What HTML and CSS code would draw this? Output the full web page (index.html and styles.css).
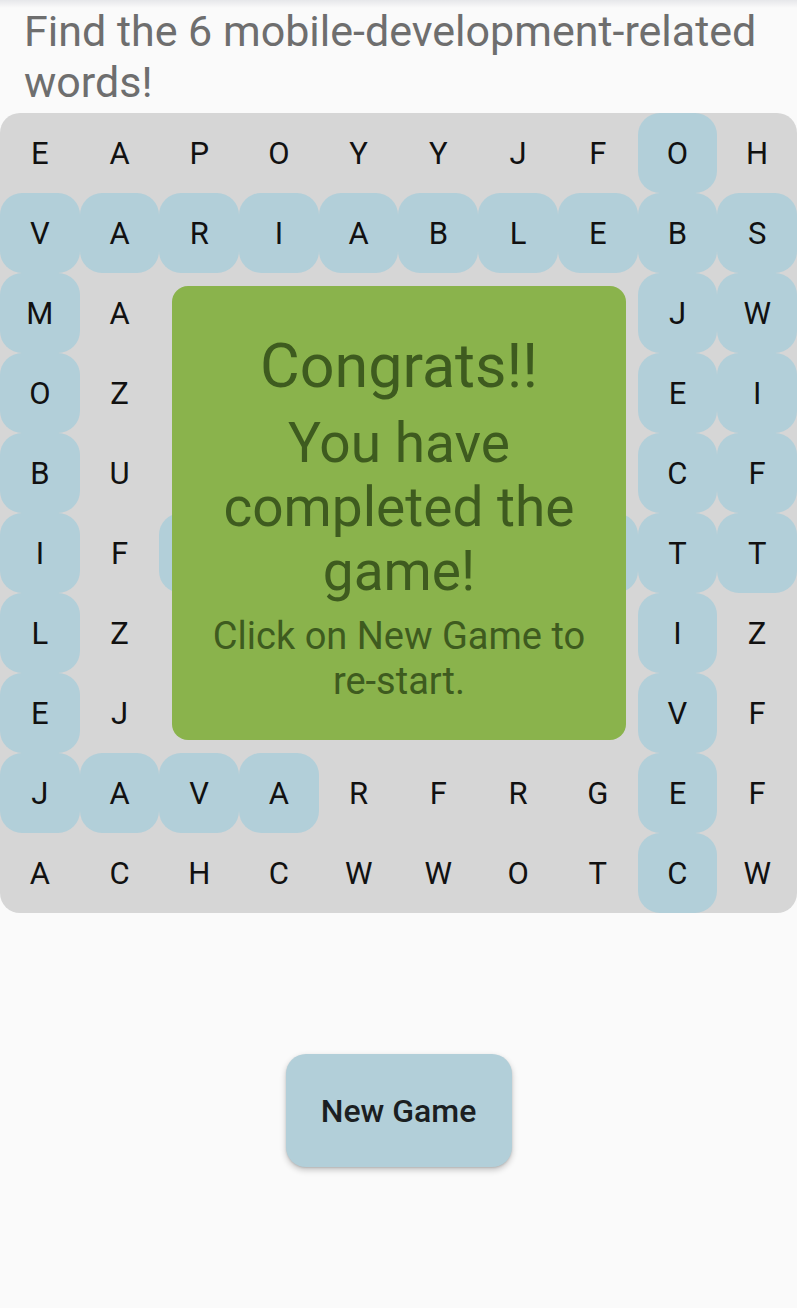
FILE: index.html
```html
<!DOCTYPE html>
<html>
<head>
<meta charset="utf-8">
<link rel="stylesheet" href="styles.css">
</head>
<body>
<div class="topshade"></div>
<h1 class="title">Find the 6 mobile-development-related words!</h1>
<div class="board">
  <div class="grid">
    <div class="cell">E</div><div class="cell">A</div><div class="cell">P</div><div class="cell">O</div><div class="cell">Y</div><div class="cell">Y</div><div class="cell">J</div><div class="cell">F</div><div class="cell hit">O</div><div class="cell">H</div>
    <div class="cell hit">V</div><div class="cell hit">A</div><div class="cell hit">R</div><div class="cell hit">I</div><div class="cell hit">A</div><div class="cell hit">B</div><div class="cell hit">L</div><div class="cell hit">E</div><div class="cell hit">B</div><div class="cell hit">S</div>
    <div class="cell hit">M</div><div class="cell">A</div><div class="cell">Q</div><div class="cell">X</div><div class="cell">R</div><div class="cell">T</div><div class="cell">U</div><div class="cell">K</div><div class="cell hit">J</div><div class="cell hit">W</div>
    <div class="cell hit">O</div><div class="cell">Z</div><div class="cell">N</div><div class="cell">D</div><div class="cell">P</div><div class="cell">L</div><div class="cell">M</div><div class="cell">S</div><div class="cell hit">E</div><div class="cell hit">I</div>
    <div class="cell hit">B</div><div class="cell">U</div><div class="cell">G</div><div class="cell">H</div><div class="cell">Y</div><div class="cell">W</div><div class="cell">E</div><div class="cell">A</div><div class="cell hit">C</div><div class="cell hit">F</div>
    <div class="cell hit">I</div><div class="cell">F</div><div class="cell hit">K</div><div class="cell hit">O</div><div class="cell hit">T</div><div class="cell hit">L</div><div class="cell hit">I</div><div class="cell hit">N</div><div class="cell hit">T</div><div class="cell hit">T</div>
    <div class="cell hit">L</div><div class="cell">Z</div><div class="cell">B</div><div class="cell">V</div><div class="cell">C</div><div class="cell">R</div><div class="cell">O</div><div class="cell">D</div><div class="cell hit">I</div><div class="cell">Z</div>
    <div class="cell hit">E</div><div class="cell">J</div><div class="cell">H</div><div class="cell">N</div><div class="cell">X</div><div class="cell">U</div><div class="cell">Q</div><div class="cell">P</div><div class="cell hit">V</div><div class="cell">F</div>
    <div class="cell hit">J</div><div class="cell hit">A</div><div class="cell hit">V</div><div class="cell hit">A</div><div class="cell">R</div><div class="cell">F</div><div class="cell">R</div><div class="cell">G</div><div class="cell hit">E</div><div class="cell">F</div>
    <div class="cell">A</div><div class="cell">C</div><div class="cell">H</div><div class="cell">C</div><div class="cell">W</div><div class="cell">W</div><div class="cell">O</div><div class="cell">T</div><div class="cell hit">C</div><div class="cell">W</div>
  </div>
  <div class="popup">
    <div class="popup-title">Congrats!!</div>
    <div class="popup-main">You have completed the game!</div>
    <div class="popup-sub">Click on New Game to re-start.</div>
  </div>
</div>
<div class="actions">
  <button class="new-game">New Game</button>
</div>
</body>
</html>
```
FILE: styles.css
```css
html, body {
  margin: 0;
  padding: 0;
}
body {
  background: #fafafa;
  font-family: Roboto, "Noto Sans", sans-serif;
  width: 797px;
  height: 1308px;
  position: relative;
  overflow: hidden;
}
.topshade {
  position: absolute;
  top: 0;
  left: 0;
  right: 0;
  height: 8px;
  background: linear-gradient(#e6e7ea, rgba(250,250,250,0));
}
.title {
  margin: 0;
  padding: 6px 24px 0 24px;
  font-size: 43px;
  line-height: 51px;
  font-weight: 400;
  color: #6e6e6e;
}
.board {
  position: relative;
  margin-top: 5px;
  width: 797px;
  height: 800px;
  background: #d6d6d6;
  border-radius: 20px;
  overflow: hidden;
}
.grid {
  display: grid;
  grid-template-columns: repeat(10, 1fr);
  grid-template-rows: repeat(10, 80px);
}
.cell {
  display: flex;
  align-items: center;
  justify-content: center;
  font-size: 31px;
  color: #111;
  border-radius: 22px;
}
.cell.hit {
  background: #b2cfd9;
}
.popup {
  position: absolute;
  left: 172px;
  top: 173px;
  width: 454px;
  height: 454px;
  background: #8ab34c;
  border-radius: 16px;
  box-sizing: border-box;
  padding-top: 47px;
  display: flex;
  flex-direction: column;
  align-items: center;
  text-align: center;
  color: #3e5b1f;
}
.popup-title {
  font-size: 61px;
  line-height: 66px;
}
.popup-main {
  margin-top: 12px;
  font-size: 55px;
  line-height: 64px;
  width: 390px;
}
.popup-sub {
  margin-top: 11px;
  font-size: 38px;
  line-height: 45px;
  width: 400px;
}
.actions {
  display: flex;
  justify-content: center;
  padding-top: 141px;
}
.new-game {
  width: 226px;
  height: 113px;
  border: none;
  border-radius: 20px;
  background: #b2cfd9;
  font-family: Roboto, "Noto Sans", sans-serif;
  font-size: 32px;
  font-weight: 500;
  color: #1b1f22;
  box-shadow: 0 3px 6px rgba(0,0,0,0.22), 0 1px 2px rgba(0,0,0,0.12);
}
```
